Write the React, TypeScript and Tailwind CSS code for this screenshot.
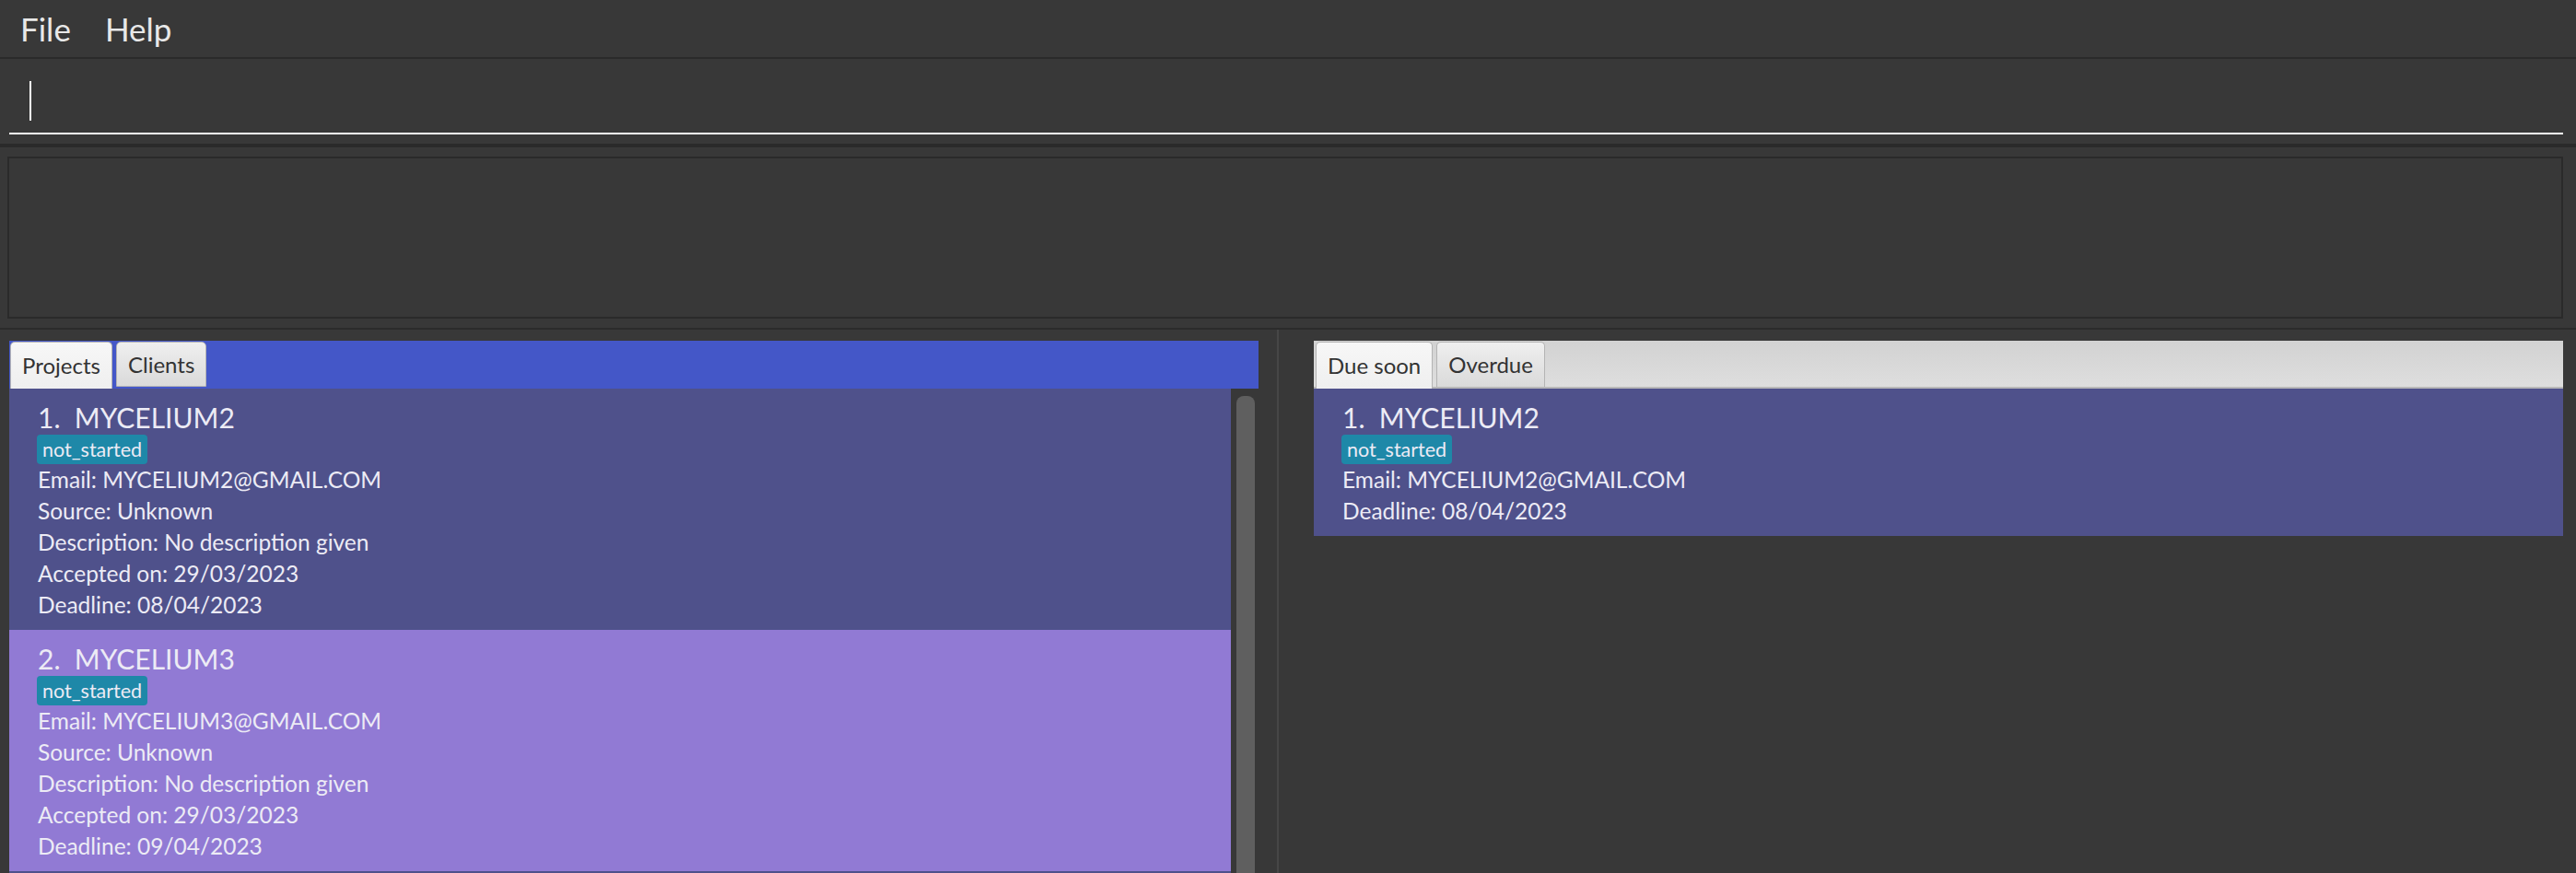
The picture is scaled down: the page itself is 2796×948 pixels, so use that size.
import React from 'react'

type Project = {
  index: number
  name: string
  email: string
  source?: string
  description?: string
  accepted?: string
  deadline: string
  tone: 'dark' | 'light'
}

const projects: Project[] = [
  { index: 1, name: 'MYCELIUM2', email: 'MYCELIUM2@GMAIL.COM', source: 'Unknown', description: 'No description given', accepted: '29/03/2023', deadline: '08/04/2023', tone: 'dark' },
  { index: 2, name: 'MYCELIUM3', email: 'MYCELIUM3@GMAIL.COM', source: 'Unknown', description: 'No description given', accepted: '29/03/2023', deadline: '09/04/2023', tone: 'light' },
]

const dueSoon: Project[] = [
  { index: 1, name: 'MYCELIUM2', email: 'MYCELIUM2@GMAIL.COM', deadline: '08/04/2023', tone: 'dark' },
]

function Tab({ label, selected, className = '' }: { label: string; selected?: boolean; className?: string }) {
  return (
    <div
      className={
        (selected
          ? 'h-[51px] px-[12px] flex items-center rounded-t-[5px] border border-b-0 border-[#b4b4b4] bg-gradient-to-b from-[#f7f7f7] to-[#efefef] text-[24px] text-[#333] '
          : 'h-[49px] px-[12px] flex items-center rounded-t-[5px] border border-[#b4b4b4] bg-gradient-to-b from-[#efefef] to-[#dadada] text-[24px] text-[#333] ') + className
      }
    >
      {label}
    </div>
  )
}

function Card({ p }: { p: Project }) {
  return (
    <div className={(p.tone === 'dark' ? 'bg-[#4f518b]' : 'bg-[#917ad4]') + ' pl-[31px] pt-[13px] pb-[10px] text-[#ecebf5]'}>
      <div className="text-[30px] leading-[37px]">
        {p.index}.&nbsp;&nbsp;{p.name}
      </div>
      <div className="h-[32px] flex">
        <span className="-ml-[1px] px-[6px] rounded-[4px] bg-[#1e88a8] text-[21.5px] leading-[32px]">not_started</span>
      </div>
      <div className="text-[24.5px] leading-[34px]">
        <div>Email: {p.email}</div>
        {p.source && <div>Source: {p.source}</div>}
        {p.description && <div>Description: {p.description}</div>}
        {p.accepted && <div>Accepted on: {p.accepted}</div>}
        <div>Deadline: {p.deadline}</div>
      </div>
    </div>
  )
}

export default function App() {
  return (
    <div className="w-[2796px] h-[948px] overflow-hidden bg-[#383838] flex flex-col" style={{ fontFamily: 'Lato, "Noto Sans", sans-serif' }}>
      {/* menu bar */}
      <div className="h-[64px] shrink-0 border-b-2 border-[#2a2a2a] flex items-center gap-[37px] pl-[22px] text-[35px] leading-none text-[#e8e8e8]">
        <span>File</span>
        <span>Help</span>
      </div>

      {/* command box */}
      <div className="h-[92px] shrink-0 pt-[10px] pl-[10px] pr-[14px]">
        <div className="h-[72px] border-b-2 border-white pt-[14px] pl-[22px]">
          <div className="w-[2px] h-[43px] bg-white" />
        </div>
      </div>
      <div className="h-[4px] shrink-0 bg-[#2a2a2a]" />

      {/* result display */}
      <div className="h-[196px] shrink-0 pt-[10px] pl-[8px] pr-[14px]">
        <div className="h-[176px] border-2 border-[#2a2a2a]" />
      </div>
      <div className="h-[2px] shrink-0 bg-[#2b2b2b]" />

      {/* lists */}
      <div className="flex-1 min-h-0 flex">
        <div className="w-[1356px] ml-[10px] mt-[12px] flex flex-col">
          <div className="h-[52px] shrink-0 bg-[#4457c8] flex items-end gap-[4px] pl-[1px]">
            <Tab label="Projects" selected />
            <Tab label="Clients" className="mb-[2px]" />
          </div>
          <div className="flex-1 min-h-0 flex">
            <div className="w-[1326px] flex flex-col">
              {projects.map((p) => (
                <Card key={p.name} p={p} />
              ))}
              <div className="h-[4px] bg-[#4f518b]" />
            </div>
            <div className="flex-1 pl-[6px] pt-[8px]">
              <div className="w-[20px] h-full rounded-t-[8px] bg-[#5f5f5f]" />
            </div>
          </div>
        </div>

        <div className="w-[2px] ml-[20px] bg-[#474747]" />

        <div className="w-[1356px] ml-[38px] mt-[12px] flex flex-col">
          <div className="h-[52px] shrink-0 bg-gradient-to-b from-[#d2d2d2] to-[#dedede] border-b-2 border-[#b8b8b8] flex items-end gap-[4px] pl-[2px]">
            <Tab label="Due soon" selected className="-mb-[2px]" />
            <Tab label="Overdue" className="border-b-0" />
          </div>
          <div>
            {dueSoon.map((p) => (
              <Card key={p.name} p={p} />
            ))}
          </div>
        </div>
      </div>
    </div>
  )
}
